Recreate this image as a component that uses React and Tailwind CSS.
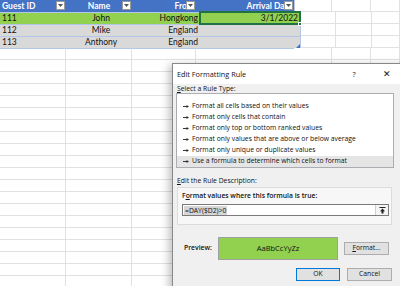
import React from "react";

const cols = [67, 68, 65, 100, 39, 39, 30];

const header = [
  { text: "Guest ID", align: "justify-start" },
  { text: "Name", align: "justify-center" },
  { text: "From", align: "justify-end" },
  { text: "Arrival Date", align: "justify-end" },
];

const people = [
  ["111", "John", "Hongkong", "3/1/2022"],
  ["112", "Mike", "England", ""],
  ["113", "Anthony", "England", ""],
];

const rules = [
  "Format all cells based on their values",
  "Format only cells that contain",
  "Format only top or bottom ranked values",
  "Format only values that are above or below average",
  "Format only unique or duplicate values",
  "Use a formula to determine which cells to format",
];

function Dropdown() {
  return (
    <span className="absolute right-[1px] top-[1px] w-[9px] h-[9px] bg-white border border-[#9a9a9a] flex items-center justify-center">
      <svg width="5" height="3" viewBox="0 0 5 3">
        <path d="M0 0h5L2.5 3z" fill="#555" />
      </svg>
    </span>
  );
}

function Arrow() {
  return (
    <svg width="6" height="3" viewBox="0 0 6 3" className="mr-[3px] shrink-0">
      <path d="M0 1h3.5v1H0z M3.5 0L6 1.5 3.5 3z" fill="#333" />
    </svg>
  );
}

function Sheet() {
  const rows = [];
  rows.push(
    <div key="h" className="flex h-[12px] bg-[#4472c4]">
      {header.map((h, i) => (
        <div
          key={i}
          style={{ width: cols[i] }}
          className={`relative flex items-center overflow-hidden px-[2px] text-white font-bold ${h.align}`}
        >
          <span className="whitespace-nowrap">{h.text}</span>
          <Dropdown />
        </div>
      ))}
      <div className="w-[1px] bg-[#b4c6e7]" />
      {cols.slice(4).map((w, i) => (
        <div key={i} style={{ width: w - (i === 0 ? 1 : 0) }} className="bg-white border-r border-b border-[#e1e1e1]" />
      ))}
    </div>
  );
  people.forEach((p, r) => {
    const bg = r === 0 ? "bg-[#92d050]" : "bg-[#d9d9d9]";
    rows.push(
      <div key={r} className="flex h-[12px]">
        <div className={`flex ${bg} border-t border-[#b4c6e7]`}>
          {p.map((t, i) => (
            <div
              key={i}
              style={{ width: cols[i] }}
              className={`flex items-center px-[2px] overflow-hidden whitespace-nowrap text-[#111] ${
                i === 0 ? "justify-start" : i === 1 ? "justify-center" : "justify-end"
              }`}
            >
              {t}
            </div>
          ))}
        </div>
        <div className="w-[1px] bg-[#b4c6e7]" />
        {cols.slice(4).map((w, i) => (
          <div key={i} style={{ width: w - (i === 0 ? 1 : 0) }} className="bg-white border-r border-b border-[#e1e1e1]" />
        ))}
      </div>
    );
  });
  for (let r = 0; r < 20; r++) {
    rows.push(
      <div key={"e" + r} className="flex h-[12px]">
        {cols.map((w, i) => (
          <div
            key={i}
            style={{ width: w }}
            className={`bg-white border-b border-[#e1e1e1] ${i === 3 ? "" : "border-r"} ${
              r === 0 && i < 4 ? "border-t border-t-[#b4c6e7]" : ""
            }`}
          />
        ))}
      </div>
    );
  }
  return (
    <div className="relative text-[8.5px] leading-none" style={{ fontFamily: "Lato, 'Liberation Sans', sans-serif" }}>
      {rows}
      {/* selected cell D2 */}
      <div className="absolute left-[199px] top-[11px] w-[102px] h-[14px] border-2 border-[#217346]" />
      <div className="absolute left-[298px] top-[22px] w-[4px] h-[4px] bg-[#217346] border border-white" />
      <svg className="absolute left-[296px] top-[44px]" width="4" height="4" viewBox="0 0 4 4">
        <path d="M4 0v4H0z" fill="#4472c4" />
      </svg>
    </div>
  );
}

function Dialog() {
  return (
    <div
      className="absolute left-[172px] top-[63px] w-[240px] h-[240px] border border-[#888] bg-[#f0f0f0] text-[6.8px] text-[#111] shadow-[-3px_2px_8px_rgba(0,0,0,0.25)]"
      style={{ fontFamily: "'Open Sans', 'Noto Sans', sans-serif" }}
    >
      <div className="h-[20px] bg-white flex items-center pl-[4px] text-[7.3px]">
        <span>Edit Formatting Rule</span>
        <span className="ml-auto w-[10px] text-center mr-[23px]">?</span>
        <span className="w-[10px] text-center mr-[19px] text-[9px]">✕</span>
      </div>
      <div className="pl-[3px]">
        <div className="h-[9px] leading-[9px] pl-[1px]">
          <span className="underline">S</span>elect a Rule Type:
        </div>
        <div className="w-[218px] h-[75px] bg-white border border-[#abadb3] pt-[7px]">
          {rules.map((r, i) => (
            <div
              key={i}
              className={`h-[11px] flex items-center pl-[6px] ${i === 5 ? "bg-[#e5e5e5]" : ""}`}
            >
              <Arrow />
              <span className="whitespace-nowrap">{r}</span>
            </div>
          ))}
        </div>
        <div className="mt-[8px] h-[10px] leading-[10px] pl-[1px]">
          <span className="underline">E</span>dit the Rule Description:
        </div>
        <div className="mt-[1px] ml-[1px] w-[215px] h-[38px] border border-[#dcdcdc] bg-[#f7f7f7] pt-[3px] pl-[4px]">
          <div className="h-[10px] leading-[10px] font-semibold">
            F<span className="underline">o</span>rmat values where this formula is true:
          </div>
          <div className="mt-[3px] w-[207px] h-[12px] bg-white border border-[#7a7a7a] flex items-center">
            <span className="ml-[1px] bg-[#d6d6d6] leading-[9px] px-[1px]">=DAY($D2)&gt;0</span>
            <span className="ml-auto w-[13px] h-full border-l border-[#cfcfcf] bg-[#f4f4f4] flex items-center justify-center">
              <svg width="7" height="7" viewBox="0 0 7 7">
                <path d="M0.5 0.5h6" stroke="#222" strokeWidth="1" />
                <path d="M3.5 1.5L6 4.2H4.5V6.5h-2V4.2H1z" fill="#222" />
              </svg>
            </span>
          </div>
        </div>
        <div className="mt-[12px] h-[23px] flex items-center">
          <span className="ml-[8px] w-[34px] font-semibold">Preview:</span>
          <div className="w-[120px] h-[23px] bg-[#92d050] border border-[#a0a0a0] flex items-center justify-center text-[7.5px]">
            AaBbCcYyZz
          </div>
          <div className="ml-[6px] w-[45px] h-[13px] bg-[#e1e1e1] border border-[#adadad] flex items-center justify-center">
            <span>
              <span className="underline">F</span>ormat...
            </span>
          </div>
        </div>
        <div className="mt-[8px] h-[13px] flex">
          <div className="ml-[120px] w-[44px] h-[13px] bg-[#e1e1e1] border border-[#0078d7] flex items-center justify-center">
            OK
          </div>
          <div className="ml-[7px] w-[45px] h-[13px] bg-[#e1e1e1] border border-[#adadad] flex items-center justify-center">
            Cancel
          </div>
        </div>
      </div>
    </div>
  );
}

export default function App() {
  return (
    <div className="relative w-[400px] h-[286px] overflow-hidden bg-white">
      <Sheet />
      <Dialog />
    </div>
  );
}
